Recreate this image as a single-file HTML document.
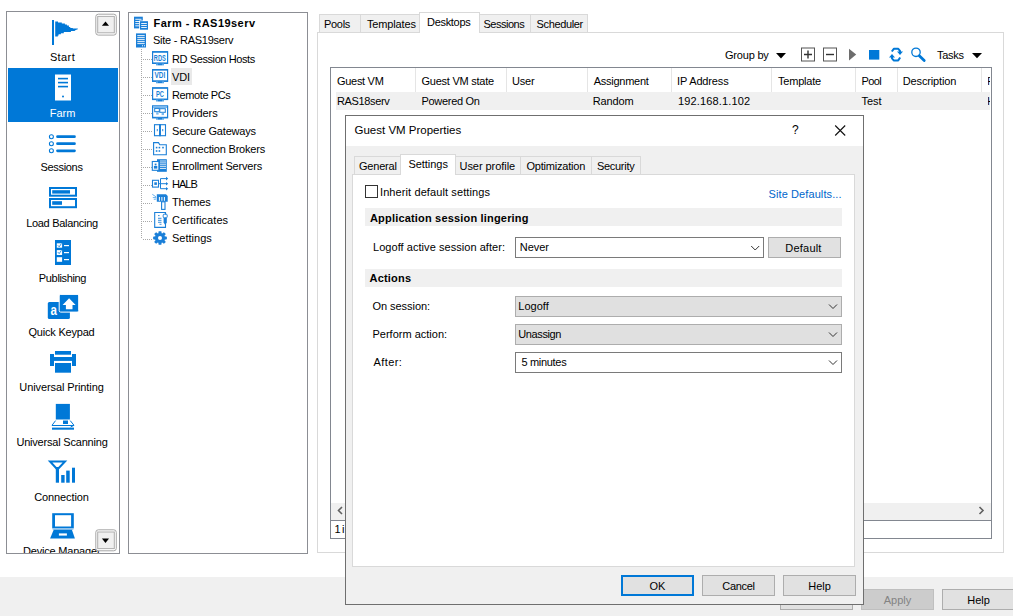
<!DOCTYPE html>
<html><head><meta charset="utf-8">
<style>
*{box-sizing:border-box;margin:0;padding:0}
html,body{width:1013px;height:616px;overflow:hidden;background:#fff;font-family:"Liberation Sans",sans-serif;font-size:11px;color:#000}
.a{position:absolute}
.t{position:absolute;line-height:14px;white-space:nowrap}
svg{position:absolute;overflow:visible}
</style></head><body>

<!-- bottom bar -->
<div class="a" style="left:0;top:577px;width:1013px;height:39px;background:#f0f0f0"></div>

<div class="a" style="left:780px;top:589px;width:73px;height:21px;border:1px solid #adadad;background:#e1e1e1"></div>
<div class="a" style="left:861px;top:589px;width:73px;height:21px;border:1px solid #bfbfbf;background:#cccccc"></div>
<div class="t" style="left:861px;width:73px;text-align:center;top:593px;color:#838383">Apply</div>
<div class="a" style="left:942px;top:589px;width:73px;height:21px;border:1px solid #adadad;background:#e1e1e1"></div>
<div class="t" style="left:942px;width:73px;text-align:center;top:593px">Help</div>
<!-- LEFT NAV -->
<div id="nav" class="a" style="left:6px;top:11px;width:114px;height:543px;border:1px solid #8c8e94;overflow:hidden;background:#fff">
  <div class="a" style="left:1px;top:56px;width:110px;height:54px;background:#0078d7"></div>
  <div class="t" style="left:0;width:112px;text-align:center;top:38px;letter-spacing:0.4px;left:-0.5px">Start</div>
  <div class="t" style="left:0;width:112px;text-align:center;top:93.5px;color:#fff;left:-0.5px">Farm</div>
  <div class="t" style="left:0;width:112px;text-align:center;top:148px;letter-spacing:-0.3px;left:-1.5px">Sessions</div>
  <div class="t" style="left:0;width:112px;text-align:center;top:203.5px;letter-spacing:-0.3px;left:-1px">Load Balancing</div>
  <div class="t" style="left:0;width:112px;text-align:center;top:258.5px;letter-spacing:-0.35px;left:-0.5px">Publishing</div>
  <div class="t" style="left:0;width:112px;text-align:center;top:313px;letter-spacing:-0.2px;left:-1.5px">Quick Keypad</div>
  <div class="t" style="left:0;width:112px;text-align:center;top:367.5px;letter-spacing:-0.1px;left:-1.5px">Universal Printing</div>
  <div class="t" style="left:0;width:112px;text-align:center;top:422.7px;letter-spacing:-0.2px;left:-1px">Universal Scanning</div>
  <div class="t" style="left:0;width:112px;text-align:center;top:477.5px;letter-spacing:-0.1px;left:-1.5px">Connection</div>
  <div class="t" style="left:-1.3px;width:112px;text-align:center;top:532px;letter-spacing:-0.2px">Device Manager</div>
</div>
<svg class="a" style="left:0;top:0" width="130" height="560" viewBox="0 0 130 560">
 <g fill="#0078d7">
  <!-- flag -->
  <rect x="52" y="20" width="2" height="25"/>
  <path d="M55.2,21.6 H58 V22.6 H61.8 V23.6 H64.9 V24.6 H66.9 V25.6 H68.9 V27 H70.3 V27.9 H72.8 V28.5 H77.8 V29.3 L75.7,30 L74.5,30.9 H70.9 V32 H63.8 V33.2 H60.9 V34.3 H58.6 V35.5 H57.8 V36.5 H55.2 Z"/>
  <!-- farm server (white) -->
  <rect x="55" y="74.5" width="16" height="26" fill="#fff"/>
  <rect x="58" y="77.8" width="10" height="1.6"/>
  <rect x="58" y="81.8" width="10" height="1.6"/>
  <rect x="58" y="85.8" width="10" height="1.6"/>
  <circle cx="63" cy="96.4" r="1"/>
  <!-- sessions -->
  <g fill="none" stroke="#0078d7" stroke-width="1.05">
   <circle cx="51.4" cy="136.7" r="2"/><circle cx="51.4" cy="143.7" r="2"/><circle cx="51.4" cy="150.8" r="2"/>
  </g>
  <g stroke="#0078d7" stroke-width="2.7" stroke-linecap="round">
   <line x1="57.5" y1="136.7" x2="74.5" y2="136.7"/><line x1="57.5" y1="143.7" x2="74.5" y2="143.7"/><line x1="57.5" y1="150.8" x2="74.5" y2="150.8"/>
  </g>
  <!-- load balancing -->
  <g fill="none" stroke="#0078d7" stroke-width="2">
   <rect x="50" y="188" width="26" height="7.7"/><rect x="50" y="199" width="26" height="8.2"/>
  </g>
  <rect x="52.2" y="190.2" width="17.8" height="3.4"/>
  <rect x="52.2" y="201.2" width="9.8" height="3.6"/>
  <!-- publishing -->
  <rect x="55" y="240" width="16" height="25"/>
  <g fill="#fff">
   <rect x="56.8" y="243.3" width="5.3" height="4.4"/><rect x="56.8" y="250.1" width="5.3" height="4.9"/><rect x="56.8" y="257.2" width="5.3" height="4.6"/>
   <rect x="64" y="245" width="5" height="1.2"/><rect x="64" y="252" width="5" height="1.2"/><rect x="64" y="259" width="5" height="1.2"/>
  </g>
  <path d="M57.8,245.3 L59.2,246.8 L61.4,243.6 M57.8,252.1 L59.2,253.6 L61.4,250.4" stroke="#0078d7" stroke-width="0.8" fill="none"/>
  <!-- quick keypad -->
  <rect x="47.8" y="301.9" width="22.1" height="17.1" rx="1.5"/>
  <rect x="59.2" y="294.4" width="19.5" height="17.7" rx="1.5" stroke="#fff" stroke-width="1"/>
  <path d="M69.1,298.3 L75.6,305 L72.5,305 L72.5,309.2 L65.9,309.2 L65.9,305 L62.6,305 Z" fill="#fff"/>
  <text x="50.6" y="314.8" font-family="Liberation Sans" font-size="14.5" font-weight="bold" fill="#fff" textLength="6.4" lengthAdjust="spacingAndGlyphs">a</text>
  <!-- printer -->
  <rect x="55" y="351" width="16" height="3.7"/>
  <rect x="50" y="354" width="4" height="12"/><rect x="72" y="354" width="4" height="12"/>
  <rect x="50" y="357" width="26" height="3.9"/>
  <rect x="55" y="363" width="16" height="9.7"/>
  <!-- scanner -->
  <rect x="55.8" y="403.9" width="14.1" height="15.6"/>
  <path d="M55.6,420.6 L52,425.3 M70.2,420.6 L74,425.3 L70.6,427" stroke="#0078d7" stroke-width="1" fill="none"/>
  <rect x="52" y="425" width="22" height="1"/>
  <rect x="52" y="427.6" width="22" height="2.1"/>
  <rect x="63" y="420.5" width="5" height="3.5"/>
  <!-- connection -->
  <path d="M50,461.4 L65,461.4 L57.4,469.5 Z" fill="none" stroke="#0078d7" stroke-width="2" stroke-linejoin="miter"/>
  <rect x="55.8" y="467" width="3.2" height="15.7"/>
  <rect x="61.2" y="475" width="3.4" height="7.7"/>
  <rect x="66.2" y="470.6" width="3.5" height="12.1"/>
  <rect x="72" y="467.7" width="3" height="15"/>
  <!-- laptop -->
  <rect x="52.2" y="513.2" width="21.6" height="15.2"/><rect x="55" y="515.2" width="16.1" height="11.3" fill="#fff"/><rect x="52.6" y="528.4" width="20.8" height="1.4" fill="#8cc0ee"/><path d="M53.7,529.8 L71.9,529.8 L74.9,538.4 L50.1,538.4 Z"/><rect x="58.9" y="533.4" width="8" height="2.2" fill="#fff"/>
 </g>
 <!-- scroll buttons -->
 <g>
  <rect x="95.8" y="14.2" width="20.5" height="20.9" rx="2.5" fill="#fff" stroke="#a6a6a6" stroke-width="1"/>
  <rect x="97.7" y="16.4" width="16.6" height="16.4" fill="#f0f0f0" stroke="#adadad" stroke-width="1"/>
  <path d="M101.9,25.8 L105.5,21.4 L109,25.8 Z" fill="#000"/>
  <rect x="95.8" y="529.8" width="20.5" height="21" rx="2.5" fill="#fff" stroke="#a6a6a6" stroke-width="1"/>
  <rect x="97.7" y="532" width="16.6" height="16.6" fill="#f0f0f0" stroke="#adadad" stroke-width="1"/>
  <path d="M101.9,538.6 L109,538.6 L105.5,543 Z" fill="#000"/>
 </g>
</svg>

<!-- TREE -->
<div id="tree" class="a" style="left:128px;top:12px;width:180px;height:542px;border:1px solid #8c8e94;background:#fff"></div>
<div class="a" style="left:171px;top:68px;width:21px;height:17px;background:#e9e9e9"></div>
<div class="t" style="left:153.5px;top:16px;font-weight:bold;letter-spacing:0.45px">Farm - RAS19serv</div>
<div class="t" style="left:153px;top:33px;letter-spacing:-0.25px">Site - RAS19serv</div>
<div class="t tr" style="left:172px;top:51.8px;letter-spacing:-0.4px">RD Session Hosts</div>
<div class="t tr" style="left:172px;top:69.8px;letter-spacing:-0.2px">VDI</div>
<div class="t tr" style="left:172px;top:87.8px;letter-spacing:-0.4px">Remote PCs</div>
<div class="t tr" style="left:172px;top:105.8px;letter-spacing:-0.1px">Providers</div>
<div class="t tr" style="left:172px;top:123.6px;letter-spacing:-0.2px">Secure Gateways</div>
<div class="t tr" style="left:172px;top:141.5px;letter-spacing:-0.2px">Connection Brokers</div>
<div class="t tr" style="left:172px;top:159.3px;letter-spacing:-0.2px">Enrollment Servers</div>
<div class="t tr" style="left:172px;top:177.2px;letter-spacing:-1px">HALB</div>
<div class="t tr" style="left:172px;top:195.2px;letter-spacing:-0.2px">Themes</div>
<div class="t tr" style="left:172px;top:213px;letter-spacing:0.1px">Certificates</div>
<div class="t tr" style="left:172px;top:231.2px;letter-spacing:0px">Settings</div>
<svg class="a" style="left:0;top:0" width="320" height="260" viewBox="0 0 320 260">
<path d="M141.5,49 V239" stroke="#a8a8a8" stroke-width="1" stroke-dasharray="1,1"/>
<path d="M143,59.5 H152" stroke="#a8a8a8" stroke-width="1" stroke-dasharray="1,1"/>
<path d="M143,77.5 H152" stroke="#a8a8a8" stroke-width="1" stroke-dasharray="1,1"/>
<path d="M143,95.5 H152" stroke="#a8a8a8" stroke-width="1" stroke-dasharray="1,1"/>
<path d="M143,113.5 H152" stroke="#a8a8a8" stroke-width="1" stroke-dasharray="1,1"/>
<path d="M143,131.5 H152" stroke="#a8a8a8" stroke-width="1" stroke-dasharray="1,1"/>
<path d="M143,149.5 H152" stroke="#a8a8a8" stroke-width="1" stroke-dasharray="1,1"/>
<path d="M143,167.5 H152" stroke="#a8a8a8" stroke-width="1" stroke-dasharray="1,1"/>
<path d="M143,185.5 H152" stroke="#a8a8a8" stroke-width="1" stroke-dasharray="1,1"/>
<path d="M143,203.5 H152" stroke="#a8a8a8" stroke-width="1" stroke-dasharray="1,1"/>
<path d="M143,221.5 H152" stroke="#a8a8a8" stroke-width="1" stroke-dasharray="1,1"/>
<path d="M143,239.5 H152" stroke="#a8a8a8" stroke-width="1" stroke-dasharray="1,1"/>
<g fill="#1a7fd8">
<rect x="134" y="16.7" width="8.8" height="11.7"/>
<g fill="#fff"><rect x="135.3" y="18.8" width="6.2" height="0.9"/><rect x="135.3" y="21" width="6.2" height="0.9"/><rect x="135.3" y="23.2" width="4" height="0.9"/><rect x="135.3" y="25.4" width="4" height="0.9"/></g>
<rect x="139.2" y="20.5" width="9.6" height="9.6" fill="#fff"/>
<rect x="140" y="21.2" width="8" height="8.5"/>
<g fill="#fff"><rect x="141.2" y="23" width="5.6" height="0.9"/><rect x="141.2" y="25" width="5.6" height="0.9"/><rect x="141.2" y="27" width="5.6" height="0.9"/></g>
<rect x="136" y="33.4" width="10" height="14.1"/>
<g fill="#fff"><rect x="137.3" y="35.2" width="7.4" height="0.9"/><rect x="137.3" y="37.2" width="7.4" height="0.9"/><rect x="137.3" y="39.2" width="7.4" height="0.9"/><rect x="137.3" y="41.2" width="7.4" height="0.9"/><rect x="137.3" y="43.2" width="7.4" height="0.9"/><rect x="142" y="45.3" width="1" height="1"/><rect x="144" y="45.3" width="1" height="1"/></g>
</g>
<rect x="152.6" y="51.8" width="15" height="11.6" fill="none" stroke="#1a7fd8" stroke-width="1.2"/><rect x="152" y="51.2" width="16" height="1.4" fill="#1a7fd8"/><rect x="152" y="62.5" width="16" height="1.4" fill="#1a7fd8"/><rect x="156" y="63.4" width="8" height="2" fill="#5aa7e8"/><rect x="158" y="63.5" width="4" height="1.6" fill="#1a7fd8"/>
<text x="153.8" y="60.6" font-family="Liberation Sans" font-size="8.6" font-weight="bold" fill="#1a7fd8" textLength="12" lengthAdjust="spacingAndGlyphs">RDS</text>
<rect x="152.6" y="69.7" width="15" height="11.6" fill="none" stroke="#1a7fd8" stroke-width="1.2"/><rect x="152" y="69.1" width="16" height="1.4" fill="#1a7fd8"/><rect x="152" y="80.4" width="16" height="1.4" fill="#1a7fd8"/><rect x="156" y="81.3" width="8" height="2" fill="#5aa7e8"/><rect x="158" y="81.4" width="4" height="1.6" fill="#1a7fd8"/>
<text x="154.5" y="78.4" font-family="Liberation Sans" font-size="8.6" font-weight="bold" fill="#1a7fd8" textLength="10.7" lengthAdjust="spacingAndGlyphs">VDI</text>
<rect x="152.6" y="87.9" width="15" height="11.6" fill="none" stroke="#1a7fd8" stroke-width="1.2"/><rect x="152" y="87.3" width="16" height="1.4" fill="#1a7fd8"/><rect x="152" y="98.6" width="16" height="1.4" fill="#1a7fd8"/><rect x="156" y="99.5" width="8" height="2" fill="#5aa7e8"/><rect x="158" y="99.6" width="4" height="1.6" fill="#1a7fd8"/>
<text x="156" y="96.6" font-family="Liberation Sans" font-size="8.6" font-weight="bold" fill="#1a7fd8" textLength="8" lengthAdjust="spacingAndGlyphs">PC</text>
<rect x="152.6" y="106.1" width="15" height="11.6" fill="none" stroke="#1a7fd8" stroke-width="1.2"/><rect x="152" y="105.5" width="16" height="1.4" fill="#1a7fd8"/><rect x="152" y="116.8" width="16" height="1.4" fill="#1a7fd8"/><rect x="156" y="117.7" width="8" height="2" fill="#5aa7e8"/><rect x="158" y="117.8" width="4" height="1.6" fill="#1a7fd8"/>
<rect x="153" y="106" width="14" height="2" fill="#7ab8ee"/>
<g fill="#fff" stroke="#1a7fd8" stroke-width="1"><rect x="154.7" y="108.4" width="4.6" height="3.3"/><rect x="159.8" y="108.7" width="5.5" height="3.6"/></g>
<rect x="156.2" y="112.2" width="2.4" height="2.4" fill="#7ab8ee"/><rect x="161.6" y="112.8" width="2.4" height="2.3" fill="#7ab8ee"/>
<g fill="none" stroke="#1a7fd8" stroke-width="1.1"><rect x="154.5" y="124.7" width="11" height="11"/></g>
<rect x="159" y="124.2" width="2" height="12" fill="#1a7fd8"/>
<rect x="156.8" y="129" width="0.9" height="2.2" fill="#1a7fd8"/><rect x="162.3" y="129" width="0.9" height="2.2" fill="#1a7fd8"/>
<path d="M153.6,142.6 H158.5 L159.8,144.8 H166.3 V154.8 H153.6 Z" fill="none" stroke="#1a7fd8" stroke-width="1.1"/>
<g fill="#1a7fd8"><rect x="155.8" y="146.8" width="1.6" height="1.6"/><rect x="158.6" y="146.8" width="1.6" height="1.6"/><rect x="155.8" y="150.2" width="1.6" height="1.6"/><rect x="158.6" y="150.2" width="1.6" height="1.6"/><rect x="162.2" y="146.8" width="1.6" height="1.6"/></g>
<rect x="157" y="159.2" width="9.8" height="12.6" fill="#1a7fd8"/>
<g fill="#fff"><rect x="160" y="160.6" width="6" height="0.8"/><rect x="160" y="162.5" width="6" height="0.8"/><rect x="160" y="164.4" width="6" height="0.8"/><rect x="160" y="166.3" width="6" height="0.8"/><rect x="160" y="168.2" width="6" height="0.8"/></g>
<rect x="152.3" y="161.5" width="6.6" height="8.8" fill="#fff" stroke="#1a7fd8" stroke-width="1.1"/>
<rect x="154.7" y="163.6" width="1.8" height="1.8" fill="#1a7fd8"/><rect x="153.9" y="166" width="3.4" height="2.6" fill="#1a7fd8"/>
<rect x="152.5" y="180.3" width="6" height="6.8" fill="none" stroke="#1a7fd8" stroke-width="1.1"/>
<rect x="154.3" y="182.3" width="2.6" height="2.6" fill="#1a7fd8"/>
<path d="M159,183.7 H167 M160.5,183.7 V178.6 H167 M160.5,183.7 V188.7 H167" fill="none" stroke="#1a7fd8" stroke-width="1"/>
<path d="M166,176.8 L168.2,178.6 L166,180.4 Z M166,181.9 L168.2,183.7 L166,185.5 Z M166,186.9 L168.2,188.7 L166,190.5 Z" fill="#1a7fd8"/>
<path d="M156.8,194.2 H166 L167.7,196 V201.8 H156.8 Z" fill="#1a7fd8"/><path d="M159.4,197 V200.8 M161.9,197 V200.8 M164.4,197 V200.8" stroke="#fff" stroke-width="1"/><rect x="161.6" y="201.8" width="3.4" height="7.6" fill="#fff" stroke="#1a7fd8" stroke-width="1.1"/><path d="M152.3,194.3 L156,196.8 M152.8,197.6 L156.3,197.6 M153.8,199.4 L156.3,199" stroke="#5aa7e8" stroke-width="0.9"/><path d="M154.7,212.5 H165.5 V227.4 H154.7 Z" fill="none" stroke="#1a7fd8" stroke-width="1.1"/>
<g fill="#1a7fd8"><rect x="158" y="215.2" width="1.6" height="0.9"/><rect x="158" y="217.8" width="3.5" height="0.9"/><rect x="158" y="219.8" width="3.5" height="0.9"/><rect x="158" y="221.8" width="3.5" height="0.9"/><rect x="159.5" y="223.8" width="2" height="0.9"/></g>
<rect x="163.2" y="214.2" width="4" height="3.6" rx="1" fill="#fff" stroke="#1a7fd8" stroke-width="1"/>
<path d="M163.6,218 H166.8 V222.5 L165.2,225 L163.6,222.5 Z" fill="#1a7fd8"/>
<polygon points="158.33,233.29 158.66,231.13 161.34,231.13 161.67,233.29 162.15,233.49 163.91,232.19 165.81,234.09 164.51,235.85 164.71,236.33 166.87,236.66 166.87,239.34 164.71,239.67 164.51,240.15 165.81,241.91 163.91,243.81 162.15,242.51 161.67,242.71 161.34,244.87 158.66,244.87 158.33,242.71 157.85,242.51 156.09,243.81 154.19,241.91 155.49,240.15 155.29,239.67 153.13,239.34 153.13,236.66 155.29,236.33 155.49,235.85 154.19,234.09 156.09,232.19 157.85,233.49" fill="#1a7fd8"/>
<circle cx="160" cy="238" r="2" fill="#fff"/>
</svg>

<!-- TAB STRIP -->
<div id="tabs" class="a" style="left:317px;top:32px;width:687px;height:521px;border:1px solid #d9d9d9;background:#fff"></div>
<div class="a" style="left:319px;top:14px;width:42px;height:18px;border:1px solid #d9d9d9;border-bottom:none;background:#f0f0f0"></div>
<div class="a" style="left:360px;top:14px;width:61px;height:18px;border:1px solid #d9d9d9;border-bottom:none;background:#f0f0f0"></div>
<div class="a" style="left:479px;top:14px;width:52px;height:18px;border:1px solid #d9d9d9;border-bottom:none;background:#f0f0f0"></div>
<div class="a" style="left:530px;top:14px;width:58px;height:18px;border:1px solid #d9d9d9;border-bottom:none;background:#f0f0f0"></div>
<div class="a" style="left:419px;top:12px;width:61px;height:21px;border:1px solid #d9d9d9;border-bottom:none;background:#fff"></div>
<div class="t" style="left:324px;top:17px;letter-spacing:-0.3px">Pools</div>
<div class="t" style="left:367px;top:17px;letter-spacing:-0.15px">Templates</div>
<div class="t" style="left:427px;top:15px;letter-spacing:-0.3px">Desktops</div>
<div class="t" style="left:483.5px;top:17px;letter-spacing:-0.5px">Sessions</div>
<div class="t" style="left:536.5px;top:17px;letter-spacing:-0.35px">Scheduler</div>
<div class="t" style="left:725px;top:48px;letter-spacing:-0.2px">Group by</div>
<div class="t" style="left:937px;top:48px;letter-spacing:-0.3px">Tasks</div>
<svg class="a" style="left:0;top:0" width="1013" height="120" viewBox="0 0 1013 120">
<path d="M776,53 H786 L781,58.4 Z" fill="#000"/>
<path d="M972,53 H982 L977,58.2 Z" fill="#000"/>
<rect x="801.5" y="48" width="13" height="13" fill="none" stroke="#555" stroke-width="1"/>
<path d="M804,54.5 H812 M808,50.5 V58.5" stroke="#333" stroke-width="1.4"/>
<rect x="823.5" y="48" width="13" height="13" fill="none" stroke="#555" stroke-width="1"/>
<path d="M826,54.5 H834" stroke="#333" stroke-width="1.4"/>
<path d="M849,48.7 L856.2,54.6 L849,60.5 Z" fill="#6d6d6d"/>
<rect x="869" y="50" width="10.3" height="9.6" fill="#0078d7"/>
<path d="M891.8,51.5 L893.8,48.8 H898.3 L900,50.8 V52.5" fill="none" stroke="#0078d7" stroke-width="2" stroke-linejoin="round"/><path d="M897,51.5 H903 L900,55 Z" fill="#0078d7"/><path d="M900.2,57.5 L898.2,60.4 H893.7 L892,58.4 V56.5" fill="none" stroke="#0078d7" stroke-width="2" stroke-linejoin="round"/><path d="M889,57.6 H895 L892,54 Z" fill="#0078d7"/>
<circle cx="916" cy="52.3" r="4.2" fill="none" stroke="#0078d7" stroke-width="1.3"/>
<path d="M919.3,55.8 L924.2,60.6" stroke="#0078d7" stroke-width="2.8" stroke-linecap="round"/>
</svg>
<div id="grid" class="a" style="left:330px;top:67px;width:662px;height:472px;border:1px solid #828790;background:#fff"></div>
<div class="a" style="left:415px;top:68px;width:1px;height:24px;background:#e5e5e5"></div>
<div class="a" style="left:506px;top:68px;width:1px;height:24px;background:#e5e5e5"></div>
<div class="a" style="left:587px;top:68px;width:1px;height:24px;background:#e5e5e5"></div>
<div class="a" style="left:671px;top:68px;width:1px;height:24px;background:#e5e5e5"></div>
<div class="a" style="left:771px;top:68px;width:1px;height:24px;background:#e5e5e5"></div>
<div class="a" style="left:855px;top:68px;width:1px;height:24px;background:#e5e5e5"></div>
<div class="a" style="left:897px;top:68px;width:1px;height:24px;background:#e5e5e5"></div>
<div class="a" style="left:981px;top:68px;width:1px;height:24px;background:#e5e5e5"></div>
<div class="a" style="left:336px;top:92px;width:654px;height:18px;background:#f0f0f0"></div>
<div class="t" style="left:337px;top:74px;letter-spacing:-0.3px">Guest VM</div>
<div class="t" style="left:421.5px;top:74px;letter-spacing:-0.25px">Guest VM state</div>
<div class="t" style="left:512px;top:74px;letter-spacing:-0.2px">User</div>
<div class="t" style="left:593.7px;top:74px;letter-spacing:-0.25px">Assignment</div>
<div class="t" style="left:677px;top:74px;letter-spacing:-0.15px">IP Address</div>
<div class="t" style="left:778px;top:74px;letter-spacing:-0.2px">Template</div>
<div class="t" style="left:861.5px;top:74px;letter-spacing:-0.6px">Pool</div>
<div class="t" style="left:902.8px;top:74px;letter-spacing:-0.15px">Description</div>
<div class="t" style="left:337px;top:94px;letter-spacing:-0.35px">RAS18serv</div>
<div class="t" style="left:421.5px;top:94px;letter-spacing:-0.3px">Powered On</div>
<div class="t" style="left:592.7px;top:94px;letter-spacing:-0.1px">Random</div>
<div class="t" style="left:678px;top:94px;letter-spacing:0.15px">192.168.1.102</div>
<div class="t" style="left:861.5px;top:94px;letter-spacing:0px">Test</div>
<div class="a" style="left:987.5px;top:66px;width:2px;height:44px;overflow:hidden"><div class="t" style="left:-0.5px;top:8px">F</div><div class="t" style="left:-0.5px;top:28px">H</div></div>

<div class="a" style="left:331px;top:503px;width:660px;height:17px;background:#f0f0f0"></div>
<div class="a" style="left:331px;top:520px;width:660px;height:1px;background:#828790"></div>
<svg class="a" style="left:0;top:0" width="1013" height="560" viewBox="0 0 1013 560">
<path d="M342,507 L338.5,510.5 L342,514" fill="none" stroke="#606060" stroke-width="1.6"/>
<path d="M979.5,507 L983,510.5 L979.5,514" fill="none" stroke="#606060" stroke-width="1.6"/>
</svg>
<div class="t" style="left:334.5px;top:522px">1</div><div class="t" style="left:342px;top:522px">i</div>

<!-- DIALOG -->
<div id="dlg" class="a" style="left:345px;top:115px;width:519px;height:490px;border:1px solid #6f6f6f;background:#f0f0f0"></div>
<div class="a" style="left:346px;top:116px;width:517px;height:30px;background:#fff"></div>
<div class="t" style="left:354.5px;top:123px;font-size:11.5px;letter-spacing:0px">Guest VM Properties</div>
<svg class="a" style="left:0;top:0" width="1013" height="616" viewBox="0 0 1013 616">
<path d="M835.2,125.5 L845.2,135.5 M845.2,125.5 L835.2,135.5" stroke="#111" stroke-width="1.1"/>
</svg>
<div class="t" style="left:792px;top:123px;font-size:12px">?</div>
<div class="a" style="left:352px;top:174px;width:503px;height:393px;border:1px solid #d9d9d9;background:#fff"></div>
<div class="a" style="left:354px;top:156px;width:48px;height:18px;border:1px solid #d9d9d9;border-bottom:none;background:#f0f0f0"></div>
<div class="a" style="left:455px;top:156px;width:66px;height:18px;border:1px solid #d9d9d9;border-bottom:none;background:#f0f0f0"></div>
<div class="a" style="left:520px;top:156px;width:72px;height:18px;border:1px solid #d9d9d9;border-bottom:none;background:#f0f0f0"></div>
<div class="a" style="left:591px;top:156px;width:50px;height:18px;border:1px solid #d9d9d9;border-bottom:none;background:#f0f0f0"></div>
<div class="a" style="left:400px;top:154px;width:56px;height:21px;border:1px solid #d9d9d9;border-bottom:none;background:#fff"></div>
<div class="t" style="left:359px;top:159px;letter-spacing:-0.2px">General</div>
<div class="t" style="left:408.5px;top:157px;letter-spacing:-0.05px">Settings</div>
<div class="t" style="left:459.5px;top:159px;letter-spacing:-0.05px">User profile</div>
<div class="t" style="left:526.4px;top:159px;letter-spacing:-0.2px">Optimization</div>
<div class="t" style="left:597px;top:159px;letter-spacing:-0.3px">Security</div>
<div class="a" style="left:365px;top:185px;width:13px;height:13px;border:1px solid #333;background:#fff"></div>
<div class="t" style="left:380px;top:185px;letter-spacing:0.1px">Inherit default settings</div>
<div class="t" style="left:768.5px;top:187px;color:#0066cc;letter-spacing:0.1px">Site Defaults...</div>
<div class="a" style="left:365px;top:208px;width:477px;height:18px;background:#f0f0f0"></div>
<div class="t" style="left:370px;top:211px;font-weight:bold;letter-spacing:0.18px">Application session lingering</div>
<div class="t" style="left:373px;top:240px;letter-spacing:0.05px">Logoff active session after:</div>
<div class="a" style="left:515px;top:237px;width:249px;height:21px;border:1px solid #7a7a7a;background:#fff"></div>
<div class="t" style="left:519.7px;top:240px">Never</div>
<div class="a" style="left:768px;top:237px;width:73px;height:21px;border:1px solid #adadad;background:#e1e1e1"></div>
<div class="t" style="left:767px;width:73px;text-align:center;top:241px;letter-spacing:0.2px">Default</div>
<div class="a" style="left:365px;top:269px;width:477px;height:18px;background:#f0f0f0"></div>
<div class="t" style="left:369.5px;top:271px;font-weight:bold;letter-spacing:0.2px">Actions</div>
<div class="t" style="left:372.5px;top:299px;letter-spacing:-0.05px">On session:</div>
<div class="t" style="left:372.5px;top:327px">Perform action:</div>
<div class="t" style="left:373.5px;top:355px;letter-spacing:0.4px">After:</div>
<div class="a" style="left:515px;top:296px;width:327px;height:21px;border:1px solid #adadad;background:#e0e0e0"></div>
<div class="a" style="left:515px;top:324px;width:327px;height:21px;border:1px solid #adadad;background:#e0e0e0"></div>
<div class="a" style="left:515px;top:352px;width:327px;height:21px;border:1px solid #7a7a7a;background:#fff"></div>
<div class="t" style="left:518.3px;top:299px">Logoff</div>
<div class="t" style="left:518.3px;top:327px;letter-spacing:-0.4px">Unassign</div>
<div class="t" style="left:521.4px;top:355px;letter-spacing:-0.3px">5 minutes</div>
<svg class="a" style="left:0;top:0" width="1013" height="616" viewBox="0 0 1013 616">
<path d="M751.2,246 L755.2,250 L759.2,246" fill="none" stroke="#333" stroke-width="1"/>
<path d="M829,304.5 L833,308.5 L837,304.5" fill="none" stroke="#333" stroke-width="1"/>
<path d="M829,332.5 L833,336.5 L837,332.5" fill="none" stroke="#333" stroke-width="1"/>
<path d="M829,360.5 L833,364.5 L837,360.5" fill="none" stroke="#333" stroke-width="1"/>
</svg>
<div class="a" style="left:621px;top:575px;width:73px;height:21px;border:2px solid #0078d7;background:#e1e1e1"></div>
<div class="t" style="left:621px;width:73px;text-align:center;top:579px">OK</div>
<div class="a" style="left:702px;top:575px;width:73px;height:21px;border:1px solid #adadad;background:#e1e1e1"></div>
<div class="t" style="left:702px;width:73px;text-align:center;top:579px;letter-spacing:-0.3px">Cancel</div>
<div class="a" style="left:783px;top:575px;width:73px;height:21px;border:1px solid #adadad;background:#e1e1e1"></div>
<div class="t" style="left:783px;width:73px;text-align:center;top:579px">Help</div>

</body></html>
